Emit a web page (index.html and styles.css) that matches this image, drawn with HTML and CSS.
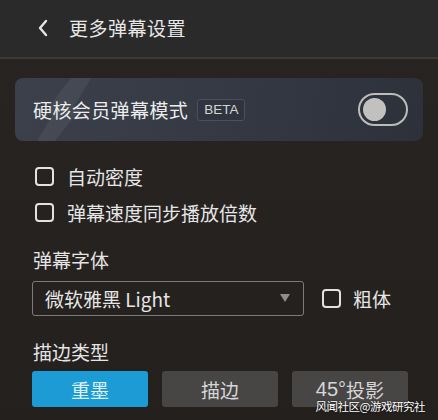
FILE: index.html
```html
<!DOCTYPE html>
<html lang="zh">
<head>
<meta charset="utf-8">
<link rel="stylesheet" href="styles.css">
</head>
<body>
<div class="page">
  <header class="header">
    <svg class="back" width="12" height="18" viewBox="0 0 12 18"><polyline points="9,2 3,9 9,16" fill="none" stroke="#e6e6e6" stroke-width="2.4" stroke-linecap="round" stroke-linejoin="round"/></svg>
    <span class="title">更多弹幕设置</span>
  </header>
  <main class="content">
    <div class="card">
      <svg class="bolt" width="60" height="63" viewBox="0 0 60 63"><polygon points="38,0 58,0 40,30 48,30 22,63 4,63 20,36 10,36" fill="rgba(255,255,255,0.06)"/></svg>
      <span class="card-title">硬核会员弹幕模式</span>
      <span class="beta">BETA</span>
      <span class="toggle"><span class="knob"></span></span>
    </div>
    <div class="options">
      <div class="check-row"><span class="box"></span><span>自动密度</span></div>
      <div class="check-row"><span class="box"></span><span>弹幕速度同步播放倍数</span></div>
    </div>
    <div class="label label-font">弹幕字体</div>
    <div class="font-row">
      <div class="select"><span>微软雅黑 Light</span><span class="arrow"></span></div>
      <div class="check-row bold"><span class="box"></span><span>粗体</span></div>
    </div>
    <div class="label label-stroke">描边类型</div>
    <div class="buttons">
      <div class="btn active">重墨</div>
      <div class="btn">描边</div>
      <div class="btn"><span class="num">45°</span>投影</div>
    </div>
  </main>
  <div class="watermark">风闻社区@游戏研究社</div>
</div>
</body>
</html>
```
FILE: styles.css
```css
* { box-sizing: border-box; }
html, body { margin: 0; padding: 0; }
body {
  width: 438px;
  height: 420px;
  overflow: hidden;
  background: #252220;
  font-family: "Noto Sans CJK SC", "Noto Sans", sans-serif;
  color: #e6e6e6;
}
.page {
  position: relative;
  width: 438px;
  height: 420px;
  background: linear-gradient(180deg, #272422 0%, #252220 60%, #23201e 100%);
}
.header {
  height: 59px;
  background: #2b2a2a;
  border-bottom: 2px solid #3b3a39;
  display: flex;
  align-items: center;
  padding-left: 37px;
  padding-bottom: 2px;
}
.back { display: block; }
.title {
  margin-left: 20px;
  font-size: 19px;
  letter-spacing: 0.5px;
  color: #e8e8e8;
}
.content { padding: 0 15px; }
.card {
  position: relative;
  margin-top: 19px;
  height: 63px;
  border-radius: 8px;
  background: linear-gradient(100deg, #3b404b 0%, #353a45 45%, #30353f 75%, #2d313a 100%);
  display: flex;
  align-items: center;
  padding: 0 15px 0 18px;
  overflow: hidden;
}
.bolt { position: absolute; left: 18px; top: 0; }
.card-title {
  position: relative;
  font-size: 19px;
  color: #ececec;
  letter-spacing: 0.4px;
}
.beta {
  position: relative;
  margin-left: 9px;
  height: 22px;
  padding: 0 6px;
  border: 1px solid #4b505a;
  border-radius: 3px;
  background: rgba(0,0,0,0.08);
  font-family: "Liberation Sans", "Noto Sans", sans-serif;
  font-size: 13.5px;
  line-height: 20px;
  color: #d4d4d4;
}
.toggle {
  margin-left: auto;
  width: 50px;
  height: 33px;
  border: 2.5px solid #bcbcbc;
  border-radius: 17px;
  display: flex;
  align-items: center;
  padding-left: 3px;
}
.knob {
  width: 23px;
  height: 23px;
  border-radius: 50%;
  background: #c3c1c0;
}
.options { padding: 17px 0 0 20px; }
.check-row {
  display: flex;
  align-items: center;
  height: 36px;
  font-size: 19px;
  color: #e6e6e6;
}
.box {
  width: 19px;
  height: 19px;
  border: 2px solid #e2e2e2;
  border-radius: 4px;
  margin-right: 13px;
  flex: none;
}
.label {
  height: 28px;
  line-height: 28px;
  padding-left: 18px;
  font-size: 19px;
  color: #e4e4e4;
}
.label-font { margin-top: 16px; }
.label-stroke { margin-top: 22px; }
.font-row {
  margin-top: 6px;
  display: flex;
  align-items: center;
  padding-left: 17px;
}
.select {
  width: 272px;
  height: 35px;
  border: 1.5px solid #7c7b7a;
  border-radius: 3px;
  display: flex;
  align-items: center;
  padding: 0 13px 0 12px;
  font-size: 19px;
  color: #e6e6e6;
}
.arrow {
  margin-left: auto;
  width: 0;
  height: 0;
  border-left: 5.5px solid transparent;
  border-right: 5.5px solid transparent;
  border-top: 8px solid #8f8e8d;
}
.bold { margin-left: 18px; }
.bold .box { margin-right: 12px; }
.buttons {
  margin-top: 5px;
  display: flex;
  gap: 14px;
  padding-left: 17px;
}
.btn {
  width: 116px;
  height: 36px;
  border-radius: 3px;
  background: #474645;
  color: #d6d6d6;
  font-size: 19px;
  display: flex;
  align-items: center;
  justify-content: center;
}
.num {
  font-family: "Liberation Sans", "Noto Sans", sans-serif;
  font-size: 20px;
}
.btn.active {
  background: #1c9bd5;
  color: #def1fa;
}
.watermark {
  position: absolute;
  right: 13px;
  bottom: 6px;
  font-size: 11.5px;
  color: #ffffff;
  text-shadow: 0 0 2px rgba(0,0,0,0.8);
  letter-spacing: -0.5px;
}
```
